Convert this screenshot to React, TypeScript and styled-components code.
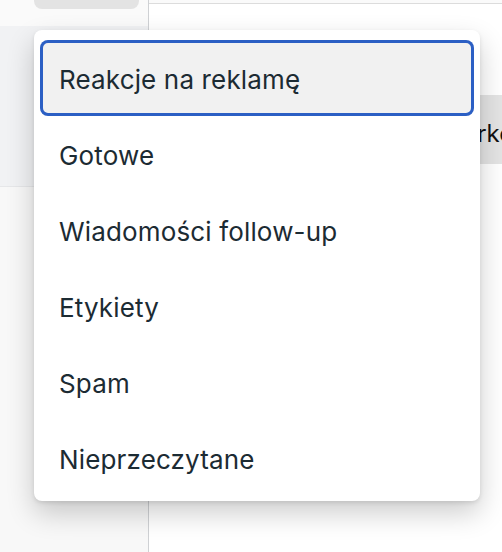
import styled, { createGlobalStyle } from "styled-components";

const items = [
  "Reakcje na reklamę",
  "Gotowe",
  "Wiadomości follow-up",
  "Etykiety",
  "Spam",
  "Nieprzeczytane",
];

const GlobalStyle = createGlobalStyle`
  *, *::before, *::after {
    margin: 0;
    padding: 0;
    box-sizing: border-box;
  }

  html, body {
    width: 100%;
    height: 100%;
    overflow: hidden;
    background: #fff;
    font-family: Inter, "Noto Sans", Arial, sans-serif;
    -webkit-font-smoothing: antialiased;
  }
`;

const Page = styled.div`
  position: relative;
  display: flex;
  width: 502px;
  height: 552px;
`;

const Sidebar = styled.aside`
  width: 149px;
  flex-shrink: 0;
  display: flex;
  flex-direction: column;
  border-right: 1px solid #cfd1d4;
`;

const SidebarTop = styled.div`
  height: 26px;
  padding-left: 34px;
  padding-right: 9px;
  background: #fafafa;
`;

const Pill = styled.div`
  height: 9px;
  background: #e3e3e3;
  border-radius: 0 0 8px 8px;
`;

const SidebarSection = styled.div`
  height: 161px;
  background: #f1f2f4;
  border-bottom: 1px solid #e6e7e9;
`;

const SidebarRest = styled.div`
  flex: 1;
  background: #f8f8f8;
`;

const Main = styled.main`
  flex: 1;
  display: flex;
  flex-direction: column;
`;

const TopRule = styled.div`
  height: 4px;
  border-bottom: 1px solid #dcdcdc;
  background: #fafafa;
`;

const TabRow = styled.div`
  margin-top: 91px;
  display: flex;
  justify-content: flex-end;
`;

const Tab = styled.div`
  height: 69px;
  width: 90px;
  background: #e4e4e4;
  display: flex;
  align-items: center;
  padding-left: 30px;
  padding-top: 8px;
  font-size: 24px;
  color: #111;
  white-space: nowrap;
  overflow: hidden;
`;

const Menu = styled.ul`
  position: absolute;
  left: 34px;
  top: 30px;
  width: 446px;
  list-style: none;
  background: #fff;
  border-radius: 8px;
  padding: 10px 6px 5px;
  box-shadow: 0 12px 28px rgba(0, 0, 0, 0.2), 0 2px 4px rgba(0, 0, 0, 0.1);
`;

const Item = styled.li<{ $active?: boolean }>`
  height: 76px;
  display: flex;
  align-items: center;
  padding: 3px 0 0 19px;
  font-size: 26px;
  letter-spacing: 0.15px;
  color: #1c2b33;
  border-radius: 8px;
  background: ${(p) => (p.$active ? "#f1f1f1" : "transparent")};
  box-shadow: ${(p) => (p.$active ? "inset 0 0 0 3px #2b5fc4" : "none")};
`;

export default function App() {
  return (
    <>
      <GlobalStyle />
      <Page>
        <Sidebar>
          <SidebarTop>
            <Pill />
          </SidebarTop>
          <SidebarSection />
          <SidebarRest />
        </Sidebar>
        <Main>
          <TopRule />
          <TabRow>
            <Tab>Marketing</Tab>
          </TabRow>
        </Main>
        <Menu>
          {items.map((label, i) => (
            <Item key={label} $active={i === 0}>
              {label}
            </Item>
          ))}
        </Menu>
      </Page>
    </>
  );
}
